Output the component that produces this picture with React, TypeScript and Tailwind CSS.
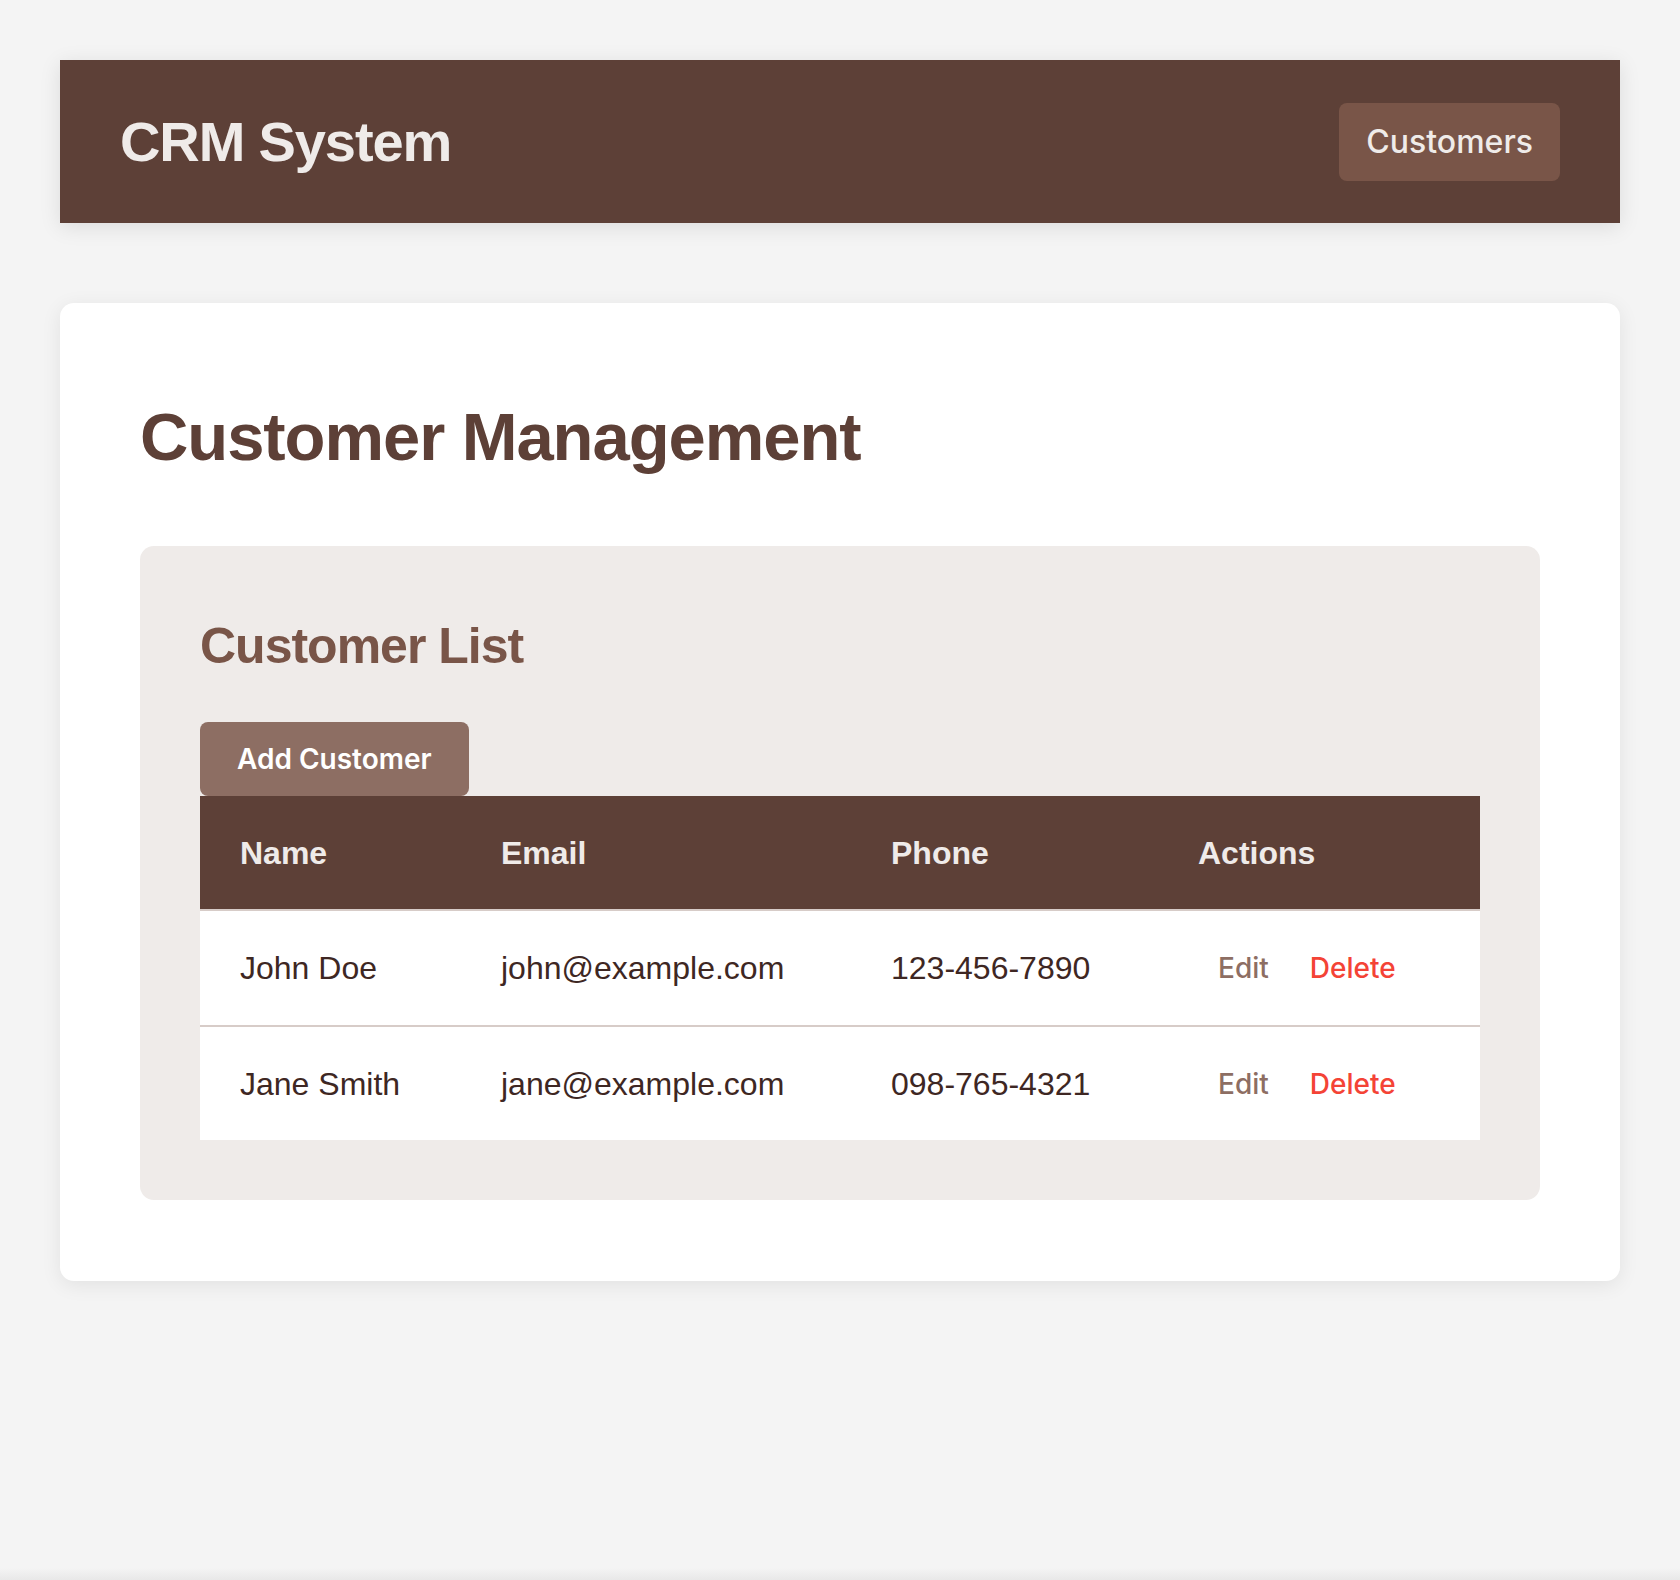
import React from "react";

const customers = [
  { name: "John Doe", email: "john@example.com", phone: "123-456-7890" },
  { name: "Jane Smith", email: "jane@example.com", phone: "098-765-4321" },
];

export default function App() {
  return (
    <div className="min-h-[1580px] flex flex-col bg-[#f4f4f4] font-['Liberation_Sans',Helvetica,Arial,sans-serif]">
      <div className="flex flex-col px-[60px] pt-[60px]">
        <header className="h-[163px] bg-[#5d4037] px-[60px] flex items-center justify-between shadow-[0_4px_20px_rgba(0,0,0,0.1)]">
          <h1 className="text-[56px] leading-none font-bold tracking-[-0.02em] text-[#efebe9]">CRM System</h1>
          <button className="h-[78px] px-[27px] rounded-[8px] bg-[#795548] text-[#efebe9] text-[32px] leading-none font-medium font-['Inter',sans-serif]">
            Customers
          </button>
        </header>

        <main className="mt-[80px] bg-white rounded-[14px] shadow-[0_4px_20px_rgba(0,0,0,0.08)] px-[80px] pt-[100px] pb-[81px]">
          <h2 className="text-[67px] leading-none font-bold tracking-[-0.016em] text-[#5d4037]">Customer Management</h2>

          <section className="mt-[76px] bg-[#efebe9] rounded-[14px] px-[60px] pt-[75px] pb-[60px]">
            <h3 className="text-[50px] leading-none font-bold tracking-[-0.02em] text-[#795548]">Customer List</h3>
            <button className="mt-[51px] h-[74px] px-[37px] rounded-[8px] bg-[#8d6e63] text-white text-[28px] leading-none font-semibold font-['Inter',sans-serif]">
              Add Customer
            </button>
            <table className="w-full table-fixed border-collapse text-[32px]">
              <colgroup>
                <col className="w-[261px]" />
                <col className="w-[390px]" />
                <col className="w-[307px]" />
                <col className="w-[322px]" />
              </colgroup>
              <thead>
                <tr className="h-[114px] bg-[#5d4037] border-b-2 border-[#d7ccc8]">
                  <th className="px-[40px] text-left font-bold text-[#efebe9]">Name</th>
                  <th className="px-[40px] text-left font-bold text-[#efebe9]">Email</th>
                  <th className="px-[40px] text-left font-bold text-[#efebe9]">Phone</th>
                  <th className="px-[40px] text-left font-bold text-[#efebe9]">Actions</th>
                </tr>
              </thead>
              <tbody>
                {customers.map((c, i) => (
                  <tr
                    key={c.email}
                    className={
                      i < customers.length - 1
                        ? "h-[116px] bg-white border-b-2 border-[#d7ccc8]"
                        : "h-[114px] bg-white"
                    }
                  >
                    <td className="px-[40px] text-[#3e2723]">{c.name}</td>
                    <td className="px-[40px] text-[#3e2723]">{c.email}</td>
                    <td className="px-[40px] text-[#3e2723]">{c.phone}</td>
                    <td className="px-[40px]">
                      <div className="flex items-center gap-[1px]">
                        <button className="px-[20px] py-[10px] text-[28px] leading-none font-medium text-[#8d6e63] font-['Inter',sans-serif]">
                          Edit
                        </button>
                        <button className="px-[20px] py-[10px] text-[28px] leading-none font-medium text-[#f44336] font-['Inter',sans-serif]">
                          Delete
                        </button>
                      </div>
                    </td>
                  </tr>
                ))}
              </tbody>
            </table>
          </section>
        </main>
      </div>
      <div className="flex-1" />
      <div className="h-[12px] bg-gradient-to-b from-[#f4f4f4] to-[#e8e8e8]" />
    </div>
  );
}
